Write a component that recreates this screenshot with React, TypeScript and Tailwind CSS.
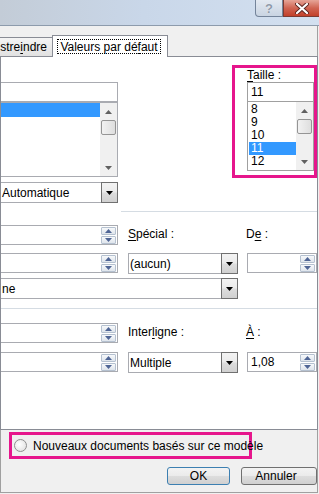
import React from "react";

const btnBg =
  "bg-[linear-gradient(#f3f3f3,#ebebeb_48%,#dddddd_52%,#d0d0d0)]";

function Spin() {
  return (
    <div className="ml-auto mr-px flex w-[15px] flex-col gap-px">
      {["up", "down"].map((d) => (
        <div
          key={d}
          className="flex h-[8px] items-center justify-center rounded-[1px] border border-[#b5c1d0] bg-[linear-gradient(#f7f9fb,#dfe5ec)]"
        >
          <svg width="7" height="4" viewBox="0 0 7 4">
            <path
              d={d === "up" ? "M0 4 L3.5 0 L7 4Z" : "M0 0 H7 L3.5 4Z"}
              fill="#4f6595"
            />
          </svg>
        </div>
      ))}
    </div>
  );
}

function SpinBox({ value, className }: { value?: string; className: string }) {
  return (
    <div
      className={`flex h-[20px] items-center border border-[#a9abb1] bg-white ${className}`}
    >
      <span className="pl-[3px] leading-none">{value}</span>
      <Spin />
    </div>
  );
}

function Combo({ value, className }: { value?: string; className: string }) {
  return (
    <div
      className={`flex h-[21px] border border-[#a9abb1] bg-white ${className}`}
    >
      <span className="flex flex-1 items-center whitespace-nowrap pl-px">{value}</span>
      <div
        className={`-my-px -mr-px flex w-[17px] items-center justify-center border border-[#707070] ${btnBg}`}
      >
        <svg width="7" height="4" viewBox="0 0 7 4">
          <path d="M0 0 H7 L3.5 4Z" fill="#000" />
        </svg>
      </div>
    </div>
  );
}

function ScrollBar({ thumbTop }: { thumbTop: number }) {
  return (
    <div className="flex w-[17px] flex-col items-center bg-[#f0f0f0] pt-[7px]">
      <svg width="7" height="4" viewBox="0 0 7 4">
        <path d="M0 4 L3.5 0 L7 4Z" fill="#606060" />
      </svg>
      <div
        style={{ marginTop: thumbTop }}
        className="h-[15px] w-[15px] rounded-[2px] border border-[#959595] bg-[linear-gradient(90deg,#f2f2f2,#dedede)]"
      />
      <svg className="mb-[6px] mt-auto" width="7" height="4" viewBox="0 0 7 4">
        <path d="M0 0 H7 L3.5 4Z" fill="#606060" />
      </svg>
    </div>
  );
}

function Label({ children }: { children: React.ReactNode }) {
  return <div className="h-[16px] whitespace-nowrap leading-[16px]">{children}</div>;
}

export default function App() {
  return (
    <div className="h-[494px] w-[319px] overflow-hidden bg-[#f0f0f0] font-['Liberation_Sans',Arial,sans-serif] text-[12px] text-black">
      {/* title bar */}
      <div className="flex h-[26px] justify-end border-b border-[#8d9bac] bg-[linear-gradient(90deg,#c3ccd7,#c9d7e9_45%,#d3e0f0)]">
        <div className="flex h-[17px] w-[28px] items-center justify-center rounded-bl-[4px] border border-t-0 border-[#74849a] bg-[linear-gradient(#e3e9f1,#c9d4e2)] text-[13px] font-bold leading-none text-[#8e9aa9] [text-shadow:0_0_1px_#fff]">
          ?
        </div>
        <div className="flex h-[17px] w-[36px] items-center justify-center border border-r-0 border-t-0 border-[#7c3a32] bg-[linear-gradient(#e6a598,#d06452_50%,#c2402a)]">
          <svg width="14" height="11" viewBox="0 0 14 11">
            <path
              d="M2 1 L12 10 M12 1 L2 10"
              stroke="#5a2520"
              strokeWidth="4"
              strokeLinecap="round"
            />
            <path
              d="M2 1 L12 10 M12 1 L2 10"
              stroke="#fff"
              strokeWidth="2.2"
              strokeLinecap="round"
            />
          </svg>
        </div>
      </div>

      {/* tabs */}
      <div className="flex h-[30px] w-[318px] items-end border-r border-[#a0a0a0]">
        <div className="flex h-[19px] w-[52px] items-center justify-end whitespace-nowrap border-t border-[#898c95] bg-[linear-gradient(#f4f4f4,#e1e1e1)] pr-[5px]">
          stre<span className="underline underline-offset-2">i</span>ndre
        </div>
        <div className="relative z-10 -mb-px flex h-[22px] w-[116px] items-start border border-b-0 border-[#898c95] bg-white pl-[4px] pt-[3px]">
          <div className="flex h-[15px] w-[104px] items-center justify-center whitespace-nowrap border border-dotted border-black">
            Valeurs par dé<span className="underline underline-offset-2">f</span>aut
          </div>
        </div>
      </div>

      {/* tab panel */}
      <div className="h-[374px] w-[318px] border border-[#898c95] bg-white">
        {/* font / size */}
        <div className="flex h-[154px] items-start">
          <div className="mt-[25px] w-[117px]">
            <div className="h-[20px] border border-l-0 border-[#a9abb1]" />
            <div className="flex h-[75px] border border-l-0 border-[#a9abb1]">
              <div className="flex-1">
                <div className="h-[14px] bg-[#3399ff]" />
              </div>
              <ScrollBar thumbTop={6} />
            </div>
            <Combo value="Automatique" className="mt-[5px] border-l-0" />
          </div>
          <div className="ml-[114px] mt-[8px] h-[113px] w-[85px] border-[3px] border-[#e6168c] pl-[12px]">
            <div className="h-[14px] whitespace-nowrap leading-[14px]">
              <span className="underline underline-offset-2">T</span>aille :
            </div>
            <div className="flex h-[20px] items-center border border-[#a0a0a0] pl-[3px]">
              11
            </div>
            <div className="flex h-[69px] border border-t-0 border-[#a0a0a0]">
              <div className="flex-1 pl-px pt-px">
                {["8", "9", "10", "11", "12"].map((s) => (
                  <div
                    key={s}
                    className={`h-[13px] pl-[2px] leading-[13px] ${
                      s === "11" ? "bg-[#3399ff] text-white" : ""
                    }`}
                  >
                    {s}
                  </div>
                ))}
              </div>
              <ScrollBar thumbTop={6} />
            </div>
          </div>
        </div>
        <div className="ml-[120px] h-px bg-[#d5dce3]" />

        {/* indentation */}
        <div className="h-[96px] pt-[13px]">
          <div className="flex items-start">
            <SpinBox className="w-[117px] border-l-0" />
            <div className="ml-[10px] w-[109px] pt-px">
              <Label>
                <span className="underline underline-offset-2">S</span>pécial :
              </Label>
            </div>
            <div className="ml-[9px] pt-px">
              <Label>
                D<span className="underline underline-offset-2">e</span> :
              </Label>
            </div>
          </div>
          <div className="mt-[8px] flex items-start">
            <SpinBox className="w-[117px] border-l-0" />
            <Combo value="(aucun)" className="ml-[10px] w-[110px]" />
            <SpinBox className="ml-[9px] w-[70px]" />
          </div>
          <Combo value="ne" className="mt-[4px] w-[237px] border-l-0" />
        </div>
        <div className="h-px bg-[#d5dce3]" />

        {/* spacing */}
        <div className="pt-[14px]">
          <div className="flex items-start">
            <SpinBox className="w-[117px] border-l-0" />
            <div className="ml-[10px] w-[109px] pt-px">
              <Label>
                Inter<span className="underline underline-offset-2">l</span>igne :
              </Label>
            </div>
            <div className="ml-[9px] pt-px">
              <Label>
                <span className="underline underline-offset-2">À</span> :
              </Label>
            </div>
          </div>
          <div className="mt-[9px] flex items-start">
            <SpinBox className="w-[117px] border-l-0" />
            <Combo value="Multiple" className="ml-[10px] w-[110px]" />
            <SpinBox value="1,08" className="ml-[9px] w-[70px]" />
          </div>
        </div>
      </div>

      {/* bottom */}
      <div className="h-[63px] w-[318px] border-b border-l border-r border-[#a0a0a0] pt-[2px]">
        <div className="ml-[8px] flex h-[27px] w-[243px] items-center border-[3px] border-[#e6168c] pl-[2px]">
          <div className="h-[13px] w-[13px] shrink-0 rounded-full border border-[#8f8f8f] bg-[radial-gradient(circle_at_40%_40%,#ffffff,#dcdcdc)]" />
          <span className="ml-[6px] whitespace-nowrap">Nouveaux documents basés sur ce modèle</span>
        </div>
        <div className="mt-[8px] flex">
          <div
            className={`ml-[166px] flex h-[18px] w-[73px] items-center justify-center rounded-[3px] border border-[#3c7fb1] ${btnBg}`}
          >
            OK
          </div>
          <div
            className={`ml-[11px] flex h-[18px] w-[76px] shrink-0 items-center justify-center rounded-[3px] border border-[#707070] pr-[6px] ${btnBg}`}
          >
            Annuler
          </div>
        </div>
      </div>
    </div>
  );
}
